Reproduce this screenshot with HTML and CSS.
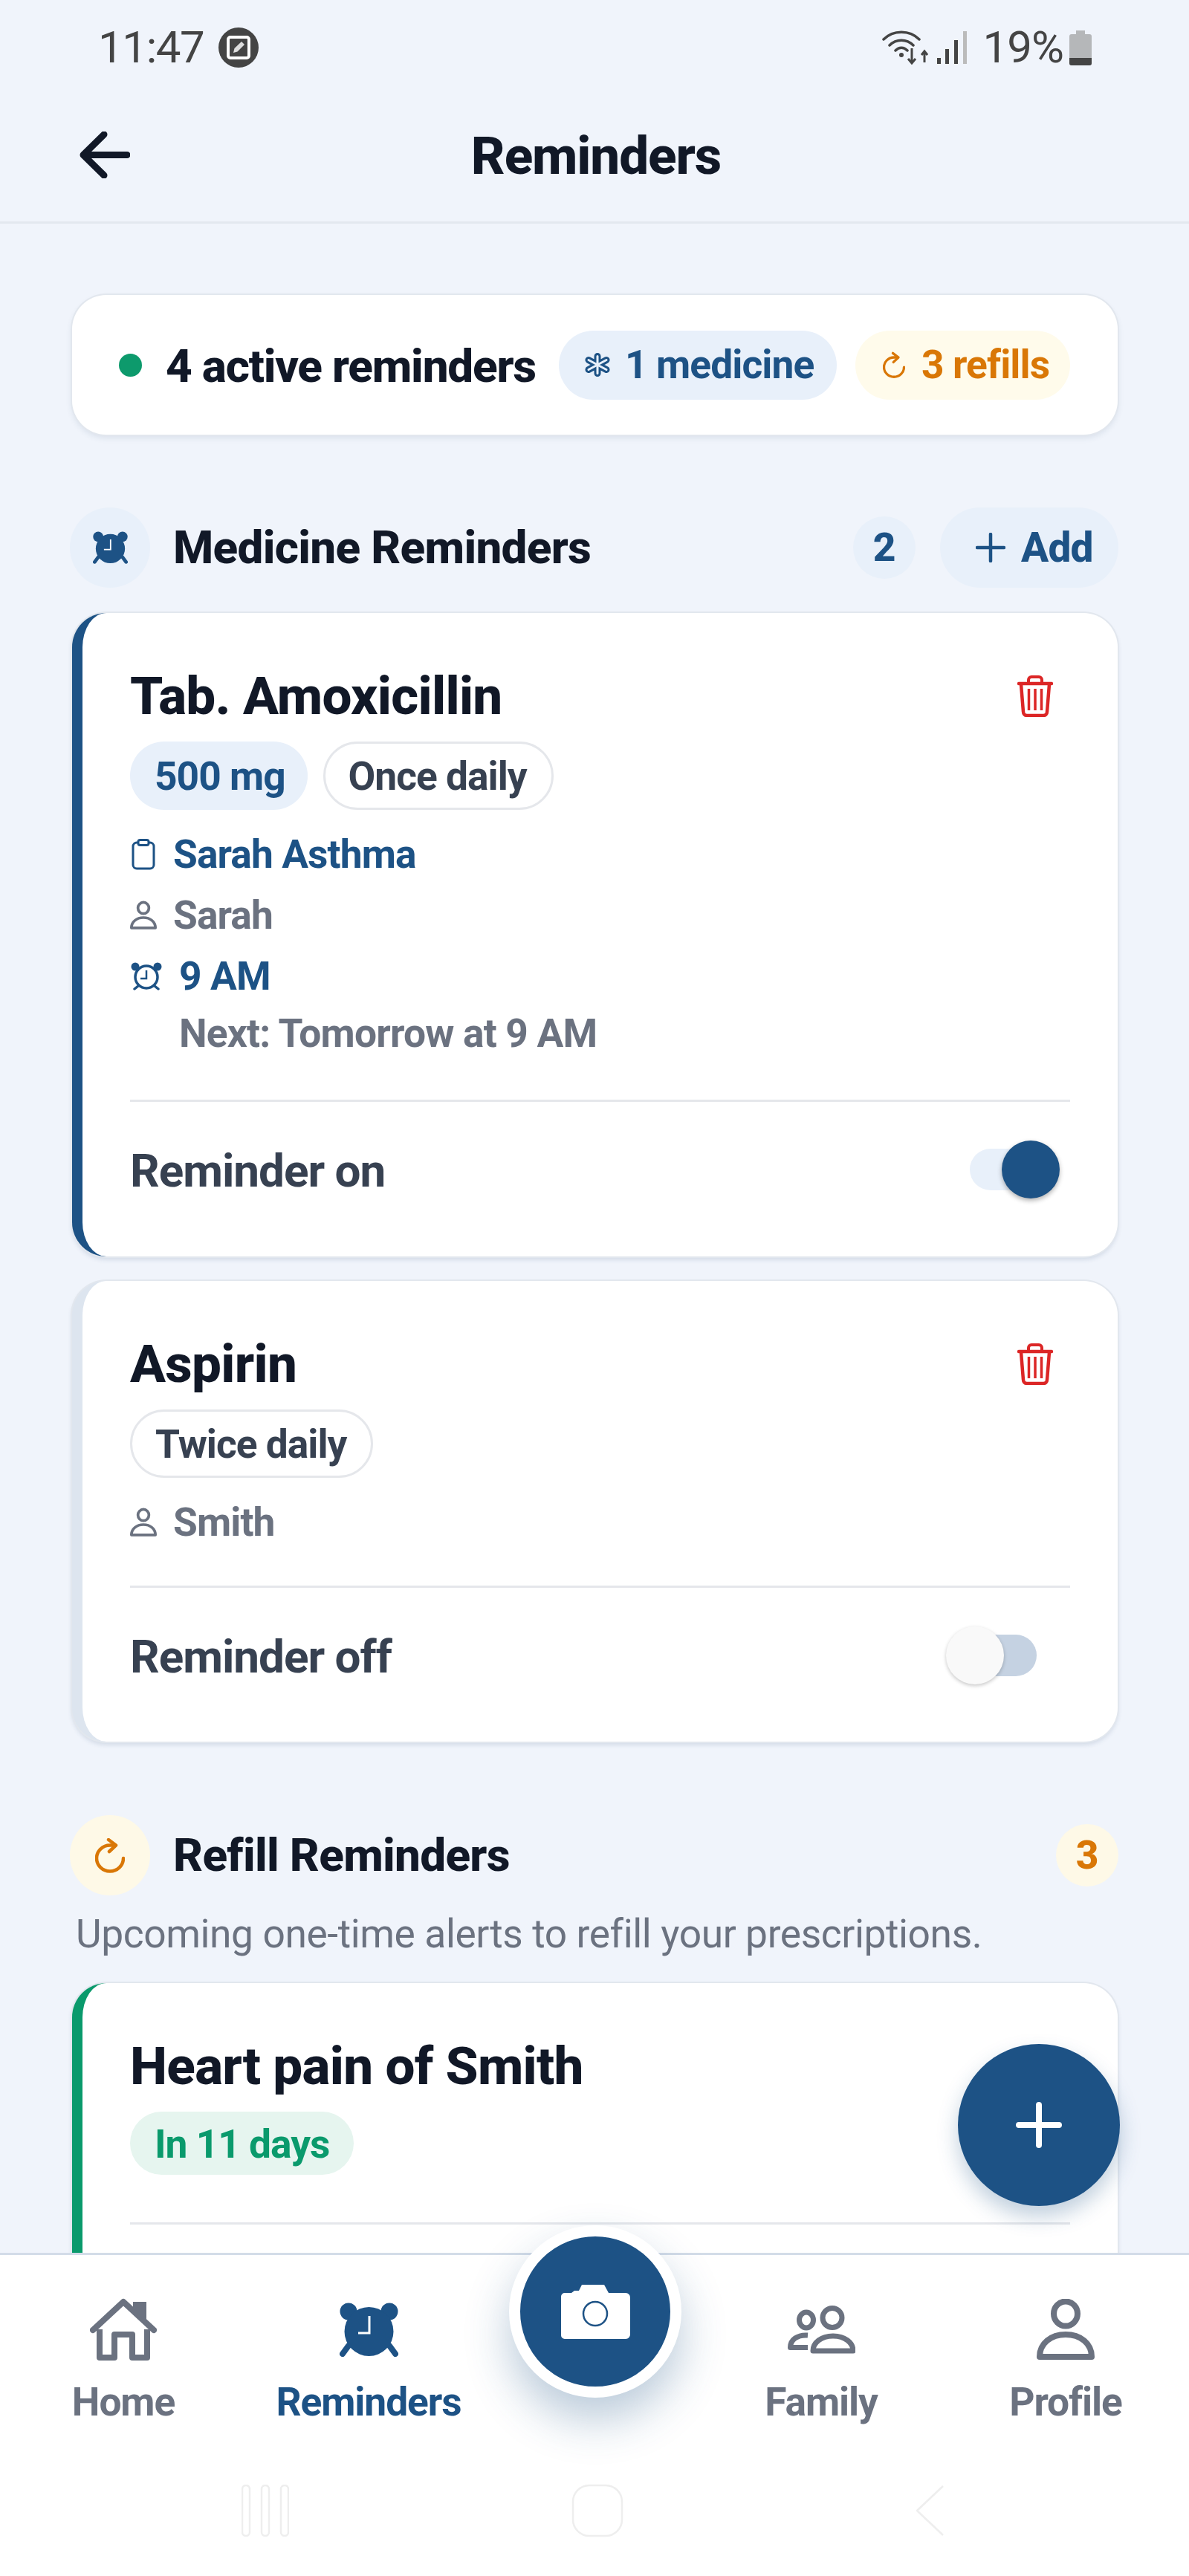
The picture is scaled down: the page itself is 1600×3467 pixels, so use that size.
FILE: index.html
```html
<!DOCTYPE html>
<html lang="en">
<head>
<meta charset="utf-8">
<title>Reminders</title>
<link rel="stylesheet" href="styles.css">
</head>
<body>
<svg class="defs" width="0" height="0" aria-hidden="true">
  <symbol id="alarm" viewBox="0 0 79 73">
    <circle cx="12" cy="12" r="11.500" fill="#1d5285"/>
    <circle cx="67" cy="12" r="11.500" fill="#1d5285"/>
    <path d="M12 58L4 69M67 58l8 11" stroke="#1d5285" stroke-width="8" stroke-linecap="round"/>
    <circle cx="39.500" cy="39" r="33" fill="#1d5285"/>
    <path d="M40 18V41H25" fill="none" stroke="#fff" stroke-width="3"/>
  </symbol>
  <symbol id="person" viewBox="0 0 78 83">
    <ellipse cx="39" cy="20" rx="16" ry="16.500" fill="none" stroke="currentColor" stroke-width="8"/>
    <path d="M4 78C4 60 19 48 39 48C59 48 74 60 74 78Z" fill="none" stroke="currentColor" stroke-width="8" stroke-linejoin="round"/>
  </symbol>
  <symbol id="trash" viewBox="0 0 48 56">
    <path d="M2 11H46" stroke="#dc2626" stroke-width="4.500" stroke-linecap="round"/>
    <path d="M15 10V6a4 4 0 0 1 4-4H29a4 4 0 0 1 4 4V10" fill="none" stroke="#dc2626" stroke-width="4"/>
    <path d="M5 12L8 49a5 5 0 0 0 5 5H35a5 5 0 0 0 5-5L43 12" fill="none" stroke="#dc2626" stroke-width="4.500"/>
    <path d="M15.500 18V47M24 18V47M32.500 18V47" stroke="#dc2626" stroke-width="3.500"/>
  </symbol>
  <symbol id="refresh" viewBox="0 0 40 47">
    <path d="M26 9.500H20A18 17.500 0 1 0 38 27" fill="none" stroke="currentColor" stroke-width="4.500" stroke-linecap="round"/>
    <path d="M18 2L28 9.500L19 18" fill="none" stroke="currentColor" stroke-width="4.500" stroke-linecap="round" stroke-linejoin="round"/>
  </symbol>
</svg>

<div class="phone">
  <div class="status">
    <div class="status-left">
      <span class="status-time">11:47</span>
      <svg class="status-badge" viewBox="0 0 54 54">
        <circle cx="27" cy="27" r="27" fill="#444"/>
        <rect x="13" y="13" width="28" height="28" rx="3" fill="none" stroke="#fff" stroke-width="4"/>
        <path d="M20 34l1.500-6L31 19l4 4-9.500 9.500z" fill="#ddd"/>
      </svg>
    </div>
    <div class="status-right">
      <svg class="status-wifi" viewBox="0 0 62 46">
        <path d="M2 12C15 -1 37 -1 50 12M10 20C19 11 33 11 42 20M18 27c5-5 11-5 16 0" fill="none" stroke="#444" stroke-width="3.500" stroke-linecap="round"/>
        <circle cx="26" cy="33" r="3" fill="#444"/>
        <path d="M40 24V43M35 38l5 6 5-6M57 43V29M53 33l4-5 4 5" fill="none" stroke="#444" stroke-width="3"/>
      </svg>
      <svg class="status-signal" viewBox="0 0 40 44">
        <rect x="0" y="36" width="5" height="8" fill="#444"/>
        <rect x="11" y="24" width="5" height="20" fill="#444"/>
        <rect x="23" y="12" width="5" height="32" fill="#444"/>
        <rect x="35" y="0" width="5" height="44" fill="#bbb"/>
      </svg>
      <span class="status-pct">19%</span>
      <svg class="status-batt" viewBox="0 0 30 47">
        <path d="M9 0H21V5H27a3 3 0 0 1 3 3V44a3 3 0 0 1-3 3H3a3 3 0 0 1-3-3V8a3 3 0 0 1 3-3H9z" fill="#b5b7b9"/>
        <path d="M0 37H30V44a3 3 0 0 1-3 3H3a3 3 0 0 1-3-3z" fill="#444"/>
      </svg>
    </div>
  </div>

  <header class="header">
    <svg class="back" viewBox="0 0 68 63"><path d="M64 31.500H7M33 4L5 31.500L33 59" fill="none" stroke="#111827" stroke-width="9" stroke-linecap="round" stroke-linejoin="round"/></svg>
    <h1 class="title">Reminders</h1>
  </header>

  <main class="content">
    <section class="summary">
      <span class="dot"></span>
      <span class="summary-text">4 active reminders</span>
      <span class="chip chip-blue">
        <svg class="chip-med" viewBox="0 0 34 32">
          <g fill="none" stroke="#1d5285" stroke-width="9" stroke-linecap="round"><path d="M17 4.500V27.500M5 9.500L29 22.500M29 9.500L5 22.500"/></g>
          <g fill="none" stroke="#e8f0fa" stroke-width="3" stroke-linecap="round"><path d="M17 4.500V27.500M5 9.500L29 22.500M29 9.500L5 22.500"/></g>
        </svg>
        1 medicine
      </span>
      <span class="chip chip-amber">
        <svg class="chip-refresh"><use href="#refresh"/></svg>
        3 refills
      </span>
    </section>

    <div class="section-head section-med">
      <span class="section-icon bg-blue"><svg class="icon-alarm-sm"><use href="#alarm"/></svg></span>
      <h2 class="section-title">Medicine Reminders</h2>
      <span class="count bg-blue text-blue">2</span>
      <button class="add-btn">
        <svg class="add-plus" viewBox="0 0 40 40"><path d="M20 2V38M2 20H38" stroke="#1d5285" stroke-width="4.500" stroke-linecap="round"/></svg>
        Add
      </button>
    </div>

    <article class="card card-blue">
      <div class="card-top">
        <h3 class="card-title">Tab. Amoxicillin</h3>
        <svg class="trash"><use href="#trash"/></svg>
      </div>
      <div class="tags">
        <span class="tag tag-blue">500 mg</span>
        <span class="tag tag-outline">Once daily</span>
      </div>
      <div class="meta-list">
        <div class="meta text-blue">
          <svg class="meta-icon" viewBox="0 0 36 42"><rect x="4" y="5" width="28" height="35" rx="5" fill="none" stroke="#1d5285" stroke-width="3"/><rect x="11" y="1.500" width="14" height="7" rx="2.500" fill="#fff" stroke="#1d5285" stroke-width="3"/></svg>
          Sarah Asthma
        </div>
        <div class="meta text-gray"><svg class="meta-icon meta-person"><use href="#person"/></svg>Sarah</div>
        <div class="meta text-blue">
          <svg class="meta-icon-wide" viewBox="0 0 44 38"><circle cx="22" cy="20" r="15" fill="none" stroke="#1d5285" stroke-width="3.500"/><path d="M22 11V22H14" fill="none" stroke="#1d5285" stroke-width="2.500"/><circle cx="7" cy="6" r="5.500" fill="#1d5285"/><circle cx="37" cy="6" r="5.500" fill="#1d5285"/><path d="M11 32l-5 4M33 32l5 4" stroke="#1d5285" stroke-width="3.500" stroke-linecap="round"/></svg>
          9 AM
        </div>
        <div class="meta-next text-gray">Next: Tomorrow at 9 AM</div>
      </div>
      <div class="toggle-row">
        <span class="toggle-label">Reminder on</span>
        <span class="switch switch-on"><span class="knob"></span></span>
      </div>
    </article>

    <article class="card card-muted">
      <div class="card-top">
        <h3 class="card-title">Aspirin</h3>
        <svg class="trash"><use href="#trash"/></svg>
      </div>
      <div class="tags">
        <span class="tag tag-outline">Twice daily</span>
      </div>
      <div class="meta-list">
        <div class="meta text-gray"><svg class="meta-icon meta-person"><use href="#person"/></svg>Smith</div>
      </div>
      <div class="toggle-row">
        <span class="toggle-label">Reminder off</span>
        <span class="switch switch-off"><span class="knob"></span></span>
      </div>
    </article>

    <div class="section-head section-refill">
      <span class="section-icon bg-amber"><svg class="icon-refresh"><use href="#refresh"/></svg></span>
      <h2 class="section-title">Refill Reminders</h2>
      <span class="count bg-amber text-amber">3</span>
    </div>
    <p class="section-sub">Upcoming one-time alerts to refill your prescriptions.</p>

    <article class="card card-green">
      <div class="card-top">
        <h3 class="card-title">Heart pain of Smith</h3>
      </div>
      <div class="tags">
        <span class="tag tag-green">In 11 days</span>
      </div>
      <div class="card-divider"></div>
    </article>
  </main>

  <button class="fab" aria-label="Add">
    <svg class="fab-plus" viewBox="0 0 62 62"><path d="M31 4V58M4 31H58" stroke="#fff" stroke-width="8" stroke-linecap="round"/></svg>
  </button>

  <nav class="tabbar">
    <div class="tabs">
      <div class="tab">
        <span class="tab-icon"><svg class="ic-home" viewBox="0 0 90 84"><path d="M4 43L45 5L86 43" fill="none" stroke="#6b7280" stroke-width="8" stroke-linecap="round" stroke-linejoin="round"/><path d="M13 42V80H33V49H57V80H77V42" fill="none" stroke="#6b7280" stroke-width="8" stroke-linejoin="round"/><path d="M60 14V7H74V32" fill="#6b7280" stroke="#6b7280" stroke-width="4"/></svg></span>
        <span class="tab-label">Home</span>
      </div>
      <div class="tab tab-active">
        <span class="tab-icon"><svg class="ic-alarm"><use href="#alarm"/></svg></span>
        <span class="tab-label">Reminders</span>
      </div>
      <div class="tab"></div>
      <div class="tab">
        <span class="tab-icon"><svg class="ic-family" viewBox="0 0 91 65"><ellipse cx="60" cy="16.500" rx="13" ry="13" fill="none" stroke="#6b7280" stroke-width="7"/><path d="M34 61C34 50 45 41 61 41C77 41 88 50 88 61Z" fill="none" stroke="#6b7280" stroke-width="7" stroke-linejoin="round"/><ellipse cx="25" cy="19.500" rx="9.500" ry="10.500" fill="none" stroke="#6b7280" stroke-width="7"/><path d="M27 40C13 39 3.500 46 3.500 56.500H27" fill="none" stroke="#6b7280" stroke-width="7" stroke-linejoin="round"/></svg></span>
        <span class="tab-label">Family</span>
      </div>
      <div class="tab">
        <span class="tab-icon"><svg class="ic-profile"><use href="#person"/></svg></span>
        <span class="tab-label">Profile</span>
      </div>
    </div>
    <button class="camera" aria-label="Camera">
      <svg class="camera-icon" viewBox="0 0 93 74"><path d="M5 12H14L18 9H24L28 1H58L64 12H87a6 6 0 0 1 6 6V68a6 6 0 0 1-6 6H5a5 5 0 0 1-5-5V17a5 5 0 0 1 5-5z" fill="#fff"/><circle cx="46" cy="40" r="16" fill="#fff" stroke="#1d5285" stroke-width="2.500"/></svg>
    </button>
    <div class="sysnav">
      <svg class="sys-menu" viewBox="0 0 64 70"><rect x="1" y="1" width="10" height="68" rx="5"/><rect x="27" y="1" width="10" height="68" rx="5"/><rect x="53" y="1" width="10" height="68" rx="5"/></svg>
      <svg class="sys-home" viewBox="0 0 70 72"><rect x="2" y="2" width="66" height="68" rx="22"/></svg>
      <svg class="sys-back" viewBox="0 0 40 70"><path d="M38 2L3 35L38 68" stroke-linejoin="round"/></svg>
    </div>
  </nav>
</div>
</body>
</html>
```

FILE: styles.css
```css
* { box-sizing: border-box; }
html, body { margin: 0; padding: 0; }
body { font-family: Roboto, "Liberation Sans", sans-serif; background: #f0f4fb; color: #111827; }
.defs { position: absolute; }
h1, h2, h3, p { margin: 0; }
button { font: inherit; border: 0; padding: 0; }

.phone { position: relative; width: 1600px; height: 3467px; overflow: hidden; display: flex; flex-direction: column; background: #f0f4fb; }

/* status bar */
.status { height: 126px; flex: none; display: flex; justify-content: space-between; align-items: center; padding: 2px 131px 0 132px; }
.status-left, .status-right { display: flex; align-items: center; color: #444; }
.status-time { font-size: 60px; letter-spacing: -1.400px; line-height: 64px; }
.status-badge { width: 54px; height: 54px; margin-left: 20px; }
.status-wifi { width: 62px; height: 46px; }
.status-signal { width: 40px; height: 44px; margin-left: 12px; }
.status-pct { font-size: 60px; letter-spacing: -1px; line-height: 64px; margin-left: 22px; margin-right: 8px; }
.status-batt { width: 30px; height: 47px; }

/* header */
.header { height: 175px; flex: none; position: relative; display: flex; align-items: center; justify-content: center; border-bottom: 3px solid #e3e8ef; }
.back { position: absolute; left: 107px; top: 51px; width: 68px; height: 63px; }
.title { font-size: 71px; font-weight: 800; letter-spacing: -1.100px; line-height: 96px; color: #111827; position: relative; top: -2px; left: 2px; }

/* content */
.content { flex: 1; min-height: 0; overflow: hidden; padding: 96px 96px 0 97px; }

.summary { height: 188px; background: #fff; border-radius: 46px; display: flex; align-items: center; padding-left: 63px; box-shadow: 0 0 0 2px #e2e7ee, 0 4px 8px rgba(40,70,110,.12); }
.dot { width: 31px; height: 31px; border-radius: 50%; background: #0d9a6c; flex: none; }
.summary-text { margin-left: 32px; padding-top: 3px; font-size: 62px; font-weight: 800; letter-spacing: -1.200px; line-height: 80px; color: #111827; white-space: nowrap; }
.chip { height: 93px; border-radius: 47px; display: flex; align-items: center; font-size: 53.300px; font-weight: 700; letter-spacing: -0.900px; white-space: nowrap; }
.chip-blue { width: 374px; margin-left: 31px; background: #e8f0fa; color: #1d5285; padding-left: 35px; }
.chip-amber { width: 289px; margin-left: 25px; background: #fffbeb; color: #d97706; padding-left: 37px; }
.chip-med { width: 34px; height: 32px; margin-right: 20px; }
.chip-refresh { width: 30px; height: 37px; margin-right: 22px; color: #d97706; }

.section-head { display: flex; align-items: center; height: 108px; margin-left: -3px; margin-right: -1px; }
.section-med { margin-top: 98px; margin-bottom: 34px; }
.section-refill { margin-top: 99px; }
.section-icon { width: 108px; height: 108px; border-radius: 50%; display: flex; align-items: center; justify-content: center; flex: none; }
.bg-blue { background: #e8f0fa; }
.bg-amber { background: #fef9e7; }
.text-blue { color: #1d5285; }
.text-amber { color: #d97706; }
.text-gray { color: #6b7280; }
.icon-alarm-sm { width: 47px; height: 44px; }
.icon-refresh { width: 40px; height: 47px; color: #d97706; }
.section-title { flex: 1; margin-left: 31px; font-size: 62px; font-weight: 800; letter-spacing: -0.700px; line-height: 80px; color: #111827; }
.count { width: 84px; height: 84px; border-radius: 50%; display: flex; align-items: center; justify-content: center; font-size: 53.300px; font-weight: 800; flex: none; }
.add-btn { width: 240px; height: 108px; margin-left: 33px; border-radius: 54px; background: #e8f0fa; color: #1d5285; font-size: 55px; font-weight: 800; letter-spacing: -0.800px; display: flex; align-items: center; padding-left: 48px; }
.add-plus { width: 40px; height: 40px; margin-right: 21px; }
.section-sub { margin: 20px 0 34px 5px; font-size: 53.300px; letter-spacing: -0.400px; line-height: 64px; color: #6b7280; }

/* cards */
.card { background: #fff; border-radius: 46px; border-left: 14px solid #dde5ef; padding: 64px 64px 0; box-shadow: 0 0 0 2px #e2e7ee, 0 4px 6px rgba(40,70,110,.16); }
.card-blue { border-left-color: #1d5285; height: 866px; margin-bottom: 33px; }
.card-muted { border-left-color: #dde5ef; height: 620px; }
.card-green { border-left-color: #0a9a6c; height: 500px; }
.card-top { display: flex; justify-content: space-between; align-items: center; height: 96px; }
.card-title { font-size: 71px; font-weight: 800; letter-spacing: -0.700px; line-height: 96px; color: #111827; }
.trash { width: 48px; height: 56px; margin-right: 23px; }
.tags { display: flex; gap: 21px; margin-top: 13px; }
.tag { height: 92px; border-radius: 46px; display: flex; align-items: center; padding: 2px 33px 0; font-size: 53.300px; font-weight: 700; letter-spacing: -1px; white-space: nowrap; }
.tag-blue { background: #e8f0fa; color: #1d5285; padding-right: 30px; }
.tag-outline { border: 3px solid #e5e7eb; color: #374151; padding-left: 31px; }
.tag-green { height: 85px; background: #e6f5ef; color: #0a9a6c; }
.meta-list { display: flex; flex-direction: column; gap: 18px; margin-top: 28px; padding-bottom: 53px; border-bottom: 3px solid #e5e7eb; }
.meta { display: flex; align-items: center; gap: 22px; height: 64px; font-size: 53.300px; font-weight: 700; letter-spacing: -0.900px; white-space: nowrap; }
.meta-icon { width: 36px; height: 42px; flex: none; }
.meta-person { color: #6b7280; }
.meta-icon-wide { width: 44px; height: 38px; flex: none; }
.meta-next { margin: -5px 0 4px 66px; height: 64px; line-height: 64px; font-size: 53.300px; font-weight: 700; letter-spacing: -0.800px; white-space: nowrap; }
.toggle-row { display: flex; align-items: center; justify-content: space-between; height: 108px; margin-top: 37px; }
.toggle-label { padding-top: 3px; font-size: 62px; font-weight: 700; letter-spacing: -1px; color: #374151; line-height: 80px; }
.switch { position: relative; width: 90px; height: 56px; border-radius: 28px; margin-right: 45px; }
.switch-on { background: #e8f0fa; }
.switch-off { background: #c5d2e2; }
.knob { position: absolute; top: -11px; width: 78px; height: 78px; border-radius: 50%; }
.switch-on .knob { left: 43px; background: #1d5285; box-shadow: 0 3px 6px rgba(0,0,0,.3); }
.switch-off .knob { left: -32px; background: #f9f9f9; box-shadow: 0 2px 5px rgba(0,0,0,.22); }
.card-divider { height: 3px; background: #e5e7eb; margin-top: 64px; }

/* floating button */
.fab { position: absolute; right: 93px; bottom: 498px; width: 218px; height: 218px; border-radius: 50%; background: #1d5285; display: flex; align-items: center; justify-content: center; box-shadow: 0 14px 28px rgba(29,82,133,.28); }
.fab-plus { width: 62px; height: 62px; }

/* tab bar */
.tabbar { position: relative; height: 435px; flex: none; background: #fff; border-top: 3px solid #d3dce8; }
.tabs { display: grid; grid-template-columns: 332px 328px 282px 326px 332px; padding-top: 58px; }
.tab { display: flex; flex-direction: column; align-items: center; }
.tab-icon { height: 84px; display: flex; align-items: center; justify-content: center; }
.tab-label { margin-top: 24px; font-size: 53.300px; font-weight: 700; letter-spacing: -1.100px; line-height: 64px; color: #6b7280; }
.tab-active .tab-label { color: #1d5285; }
.ic-home { width: 90px; height: 84px; }
.ic-alarm { width: 79px; height: 73px; }
.ic-family { width: 91px; height: 65px; }
.ic-profile { width: 78px; height: 83px; color: #6b7280; }

.camera { position: absolute; left: 685px; top: -40px; width: 232px; height: 232px; border-radius: 50%; background: #1d5285; border: 15px solid #fff; display: flex; align-items: center; justify-content: center; box-shadow: 0 30px 60px rgba(29,82,133,.30); }
.camera-icon { width: 93px; height: 74px; }

.sysnav { display: flex; align-items: center; margin-top: 78px; padding-left: 325px; }
.sysnav svg { fill: none; stroke: #eeeeee; stroke-width: 2.500; flex: none; }
.sys-menu { width: 64px; height: 70px; }
.sys-home { width: 70px; height: 72px; margin-left: 380px; }
.sys-back { width: 40px; height: 70px; margin-left: 392px; }
```
